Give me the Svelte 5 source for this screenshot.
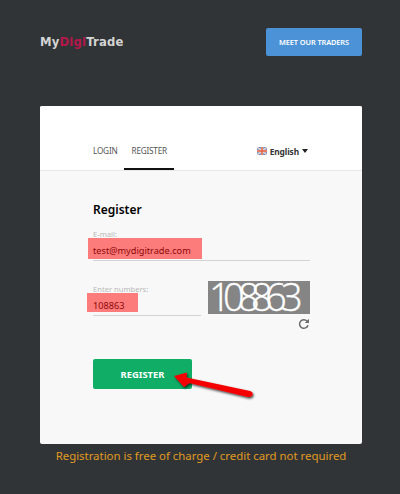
<script>
  const tabs = [
    { label: 'LOGIN', active: false },
    { label: 'REGISTER', active: true }
  ];
  const digitX = '1 15 30 43 57 73';
</script>

<div class="page">
  <header class="top">
    <div class="logo">My<span class="logo__digi">Digi</span>Trade</div>
    <button class="meet">MEET OUR TRADERS</button>
  </header>

  <main class="card">
    <div class="card__head">
      <nav class="tabs">
        {#each tabs as tab}
          <span class="tab" class:tab--active={tab.active}>{tab.label}</span>
        {/each}
      </nav>
      <div class="lang">
        <svg class="flag" viewBox="0 0 10 8" width="10" height="8">
          <rect width="10" height="8" fill="#5b86c9" />
          <path d="M0 0L10 8M10 0L0 8" stroke="#e9d5d0" stroke-width="1.4" />
          <path d="M5 0V8M0 4H10" stroke="#e9d5d0" stroke-width="2.6" />
          <path d="M5 0V8M0 4H10" stroke="#e2603f" stroke-width="1.4" />
        </svg>
        <span>English</span>
        <span class="caret"></span>
      </div>
    </div>

    <form class="form">
      <h1 class="form__title">Register</h1>

      <div class="field">
        <span class="field__label">E-mail:</span>
        <div class="field__value">test@mydigitrade.com<span class="mark mark--email"></span></div>
      </div>

      <div class="captcha-row">
        <div class="field field--short">
          <span class="field__label">Enter numbers:</span>
          <div class="field__value">108863<span class="mark mark--num"></span></div>
        </div>
        <div class="captcha">
          <svg class="captcha__img" viewBox="0 0 102 33" width="102" height="33">
            <rect width="102" height="33" fill="#858585" />
            <text x={digitX} y="30">108863</text>
          </svg>
          <svg class="refresh" viewBox="0 0 12 12" width="12" height="12">
            <path d="M10 7.2A4.3 4.3 0 1 1 9 3" fill="none" stroke="#6b6b6b" stroke-width="1.5" />
            <path d="M11 0.8V5H6.8Z" fill="#6b6b6b" />
          </svg>
        </div>
      </div>

      <button class="submit" type="button">REGISTER</button>
      <svg class="arrow" viewBox="0 0 90 40" width="90" height="40">
        <defs>
          <filter id="arrow-shadow" x="-20%" y="-40%" width="140%" height="200%">
            <feDropShadow dx="1" dy="1.5" stdDeviation="1.2" flood-color="#000" flood-opacity="0.75" />
          </filter>
        </defs>
        <path
          filter="url(#arrow-shadow)"
          fill="#f40000"
          d="M4 10L17 6.5L16.5 11.5L80 25Q83.5 26.5 82.5 29Q81 31.5 78 31L19.5 17L14 21Z"
        />
      </svg>
    </form>
  </main>

  <p class="note">Registration is free of charge / credit card not required</p>
</div>

<style>
  :global(body) {
    margin: 0;
    background: #313437;
  }

  .page {
    height: 494px;
    box-sizing: border-box;
    padding: 28px 38px 0 40px;
    background: #313437;
    font-family: "Noto Sans", "Open Sans", sans-serif;
    overflow: hidden;
  }

  .top {
    display: flex;
    align-items: center;
    justify-content: space-between;
    height: 28px;
    margin-bottom: 50px;
  }

  .logo {
    font-size: 11.6px;
    font-weight: 700;
    color: #d4d4d4;
    letter-spacing: 0.2px;
    font-family: "DejaVu Sans", sans-serif;
    margin-top: -1px;
  }

  .logo__digi {
    color: #b5174a;
  }

  .meet {
    width: 96px;
    height: 28px;
    padding: 0;
    border: 0;
    border-radius: 2px;
    background: #4b92d6;
    color: #fff;
    font-family: inherit;
    font-size: 7.4px;
    font-weight: 600;
    letter-spacing: -0.1px;
  }

  .card {
    height: 338px;
    border-radius: 2px;
    background: #f8f8f8;
    overflow: hidden;
  }

  .card__head {
    display: flex;
    align-items: flex-end;
    justify-content: space-between;
    height: 64px;
    padding: 0 54px 0 46px;
    background: #fff;
    border-bottom: 1px solid #e8e8e8;
  }

  .tabs {
    display: flex;
  }

  .tab {
    padding: 0 7px 13px;
    font-size: 8.2px;
    line-height: 12px;
    letter-spacing: -0.2px;
    color: #555;
  }

  .tab--active {
    border-bottom: 2px solid #111;
    padding: 0 7px 11px;
  }

  .lang {
    display: flex;
    align-items: center;
    gap: 3px;
    padding-bottom: 13px;
    height: 12px;
    font-size: 8.4px;
    font-weight: 700;
    letter-spacing: -0.1px;
    color: #333;
  }

  .flag {
    display: block;
  }

  .caret {
    width: 0;
    height: 0;
    border: 3.5px solid transparent;
    border-top: 4px solid #222;
    border-bottom: 0;
  }

  .form {
    position: relative;
    padding: 30px 52px 0 53px;
  }

  .form__title {
    margin: 0 0 11px;
    font-size: 12px;
    line-height: 17px;
    font-weight: 600;
    color: #000;
  }

  .field {
    border-bottom: 1px solid #d4d4d4;
  }

  .field--short {
    width: 108px;
    flex: none;
    align-self: flex-start;
  }

  .field__label {
    display: block;
    font-size: 7.6px;
    line-height: 10px;
    color: #b8b8b8;
  }

  .field__value {
    position: relative;
    height: 21px;
    padding-top: 5px;
    box-sizing: border-box;
    font-size: 9.2px;
    line-height: 14px;
    color: #111;
  }

  .mark {
    position: absolute;
    background: rgba(255, 0, 0, 0.5);
  }

  .mark--email {
    left: -5px;
    top: -1px;
    width: 114px;
    height: 21px;
  }

  .mark--num {
    left: -6px;
    top: -1px;
    width: 51px;
    height: 19px;
  }

  .captcha-row {
    display: flex;
    justify-content: space-between;
    margin-top: 23px;
  }

  .captcha {
    margin-top: -3px;
    display: flex;
    flex-direction: column;
    align-items: flex-end;
    gap: 4px;
  }

  .captcha__img {
    display: block;
    overflow: visible;
  }

  .captcha__img text {
    font-family: "Open Sans", sans-serif;
    font-weight: 300;
    font-size: 38px;
    fill: #fff;
    stroke: #fff;
    stroke-width: 0.4px;
  }

  .refresh {
    display: block;
  }

  .submit {
    display: block;
    width: 99px;
    height: 30px;
    margin-top: 29px;
    padding: 0;
    border: 0;
    border-radius: 2px;
    background: #10ad66;
    color: #fff;
    font-family: inherit;
    font-size: 9.4px;
    font-weight: 700;
  }

  .arrow {
    position: absolute;
    left: 130px;
    top: 195px;
  }

  .note {
    margin: 4px 0 0;
    text-align: center;
    font-size: 11.4px;
    line-height: 16px;
    color: #e09a20;
  }
</style>
